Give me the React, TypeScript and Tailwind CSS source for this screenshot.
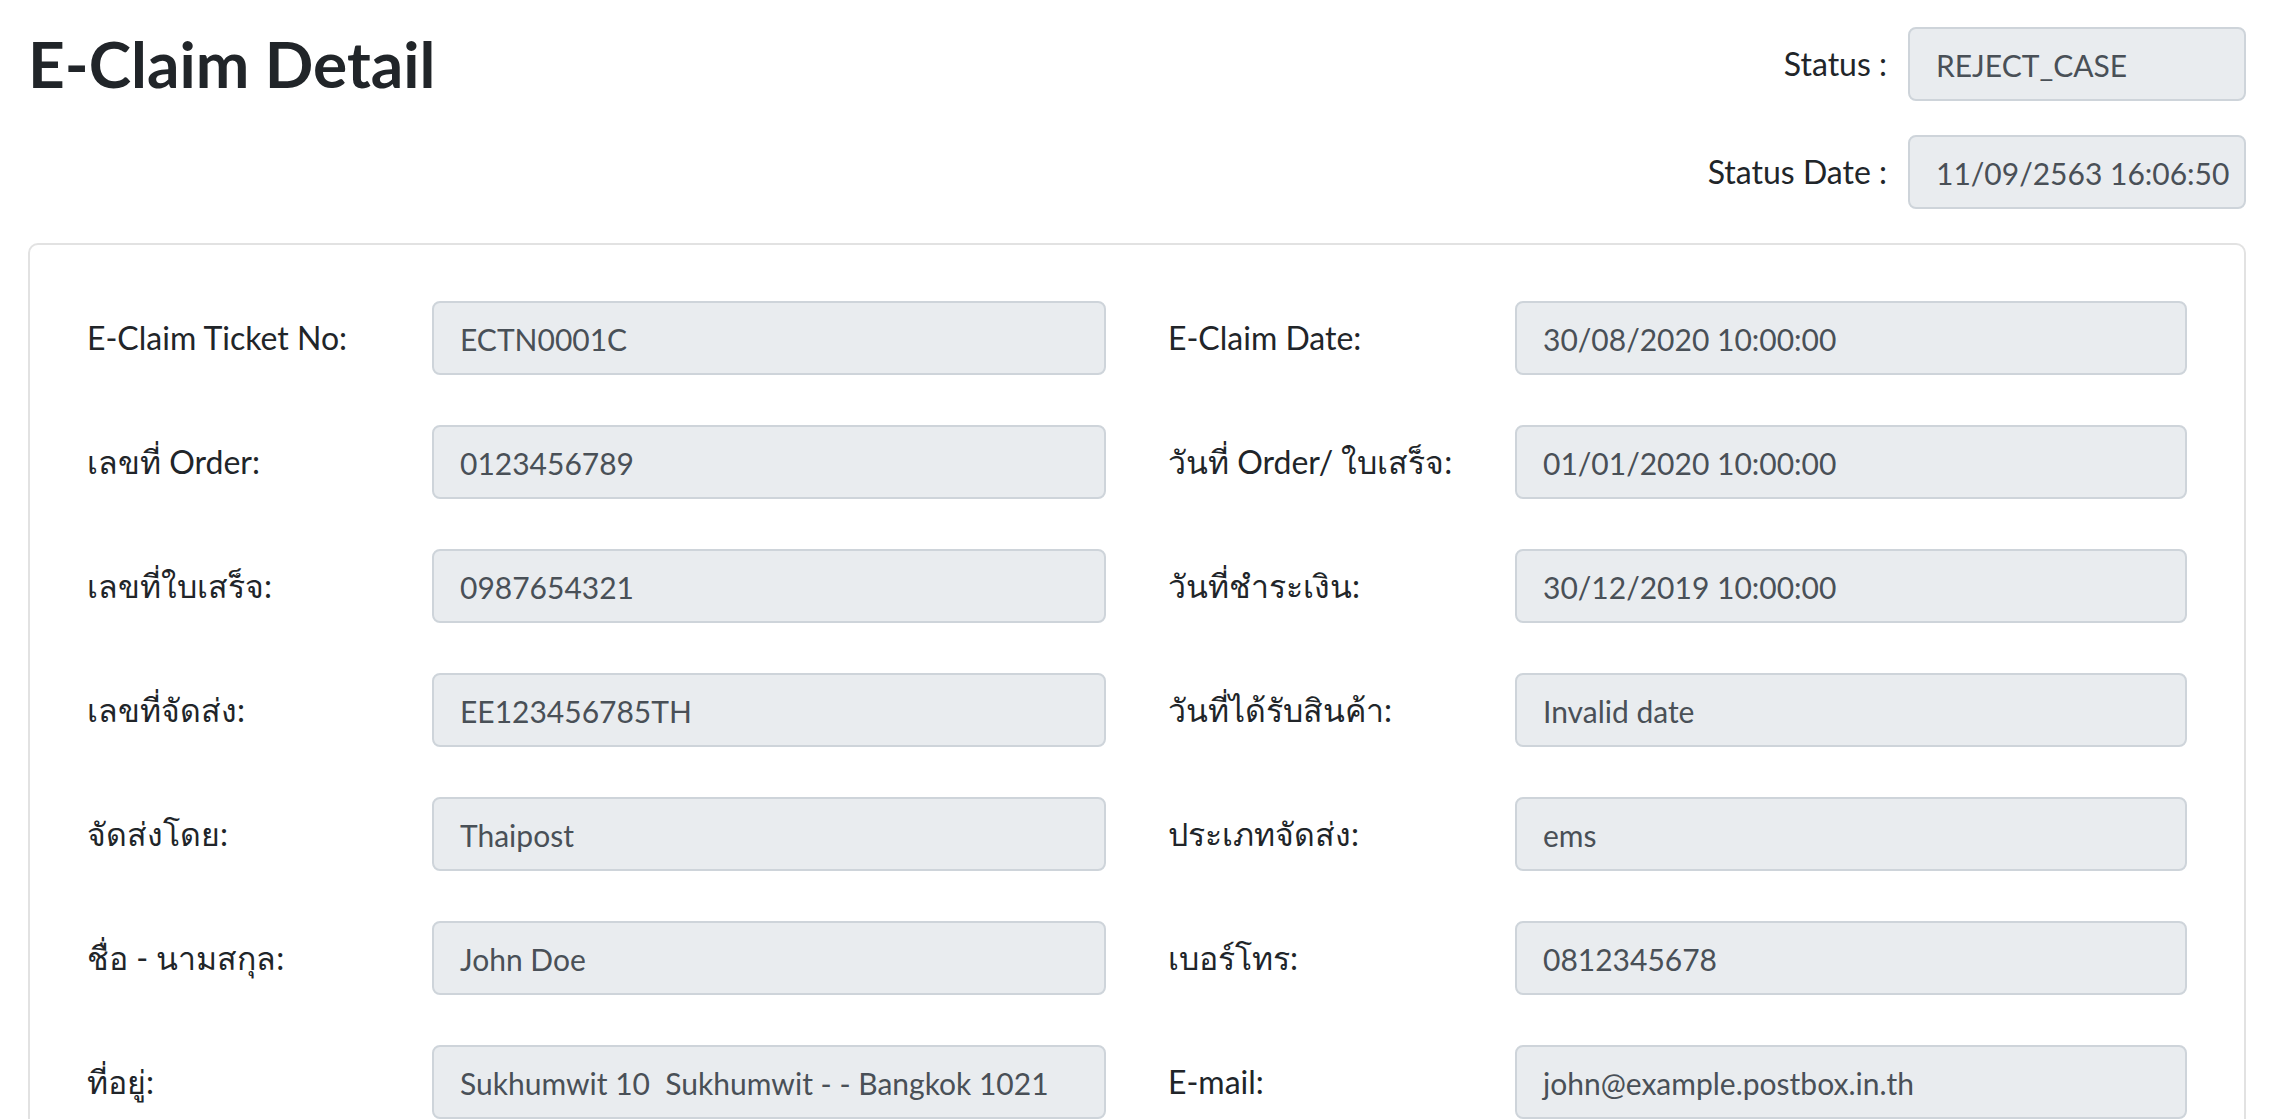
import React from "react";

const rows: [string, string, string, string][] = [
  ["E-Claim Ticket No:", "ECTN0001C", "E-Claim Date:", "30/08/2020 10:00:00"],
  ["เลขที่ Order:", "0123456789", "วันที่ Order/ ใบเสร็จ:", "01/01/2020 10:00:00"],
  ["เลขที่ใบเสร็จ:", "0987654321", "วันที่ชำระเงิน:", "30/12/2019 10:00:00"],
  ["เลขที่จัดส่ง:", "EE123456785TH", "วันที่ได้รับสินค้า:", "Invalid date"],
  ["จัดส่งโดย:", "Thaipost", "ประเภทจัดส่ง:", "ems"],
  ["ชื่อ - นามสกุล:", "John Doe", "เบอร์โทร:", "0812345678"],
  ["ที่อยู่:", "Sukhumwit 10  Sukhumwit - - Bangkok 1021", "E-mail:", "john@example.postbox.in.th"],
];

function Field({ value, className = "" }: { value: string; className?: string }) {
  return (
    <div
      className={`h-[74px] bg-[#e9ecef] border-2 border-[#ced4da] rounded-[8px] pl-[26px] pr-[10px] pt-[2px] flex items-center text-[30px] text-[#495057] whitespace-pre overflow-hidden ${className}`}
    >
      {value}
    </div>
  );
}

export default function App() {
  return (
    <div className="min-h-screen bg-white pl-[28px] pr-[36px] pt-[27px] text-[32px] text-[#212529] font-['Lato','Noto_Sans',sans-serif]">
      <div className="flex justify-between items-start">
        <h1 className="text-[64px] font-bold leading-[74px]">E-Claim Detail</h1>
        <div className="flex flex-col items-end gap-[34px]">
          <div className="flex items-center gap-[21px]">
            <span>Status :</span>
            <Field value="REJECT_CASE" className="w-[338px]" />
          </div>
          <div className="flex items-center gap-[21px]">
            <span>Status Date :</span>
            <Field value="11/09/2563 16:06:50" className="w-[338px]" />
          </div>
        </div>
      </div>
      <div className="mt-[34px] border-2 border-[#e2e2e2] rounded-[10px] px-[57px] pt-[56px] pb-[57px]">
        <div className="grid grid-cols-2 gap-x-[62px] gap-y-[50px]">
          {rows.map((r, i) => (
            <React.Fragment key={i}>
              <div className="flex items-center">
                <span className="w-[345px] shrink-0">{r[0]}</span>
                <Field value={r[1]} className="flex-1 min-w-0" />
              </div>
              <div className="flex items-center">
                <span className="w-[347px] shrink-0">{r[2]}</span>
                <Field value={r[3]} className="flex-1 min-w-0" />
              </div>
            </React.Fragment>
          ))}
        </div>
      </div>
    </div>
  );
}
